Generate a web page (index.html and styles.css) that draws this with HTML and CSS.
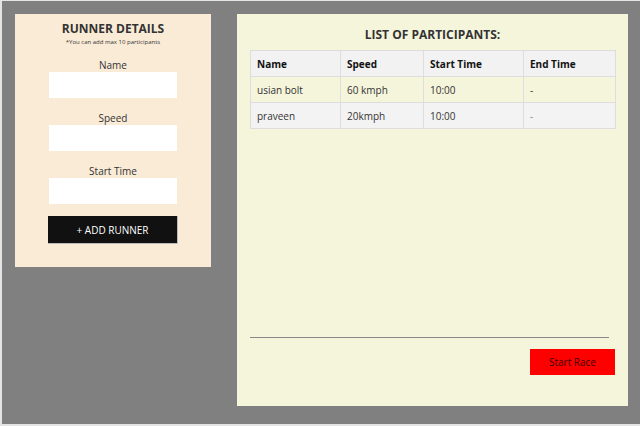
FILE: index.html
```html
<!DOCTYPE html>
<html>
<head>
<meta charset="utf-8">
<link rel="stylesheet" href="styles.css">
</head>
<body>
<div class="page">
  <div class="runner-card">
    <h2 class="card-title">RUNNER DETAILS</h2>
    <p class="note">*You can add max 10 participants</p>
    <div class="field first">
      <label class="field-label">Name</label>
      <input class="field-input" type="text">
    </div>
    <div class="field">
      <label class="field-label">Speed</label>
      <input class="field-input" type="text">
    </div>
    <div class="field">
      <label class="field-label">Start Time</label>
      <input class="field-input" type="text">
    </div>
    <button class="add-btn">+ ADD RUNNER</button>
  </div>
  <div class="list-card">
    <h2 class="card-title list-title">LIST OF PARTICIPANTS:</h2>
    <table class="participants">
      <thead>
        <tr><th class="c1">Name</th><th class="c2">Speed</th><th class="c3">Start Time</th><th class="c4">End Time</th></tr>
      </thead>
      <tbody>
        <tr class="odd"><td>usian bolt</td><td>60 kmph</td><td>10:00</td><td>-</td></tr>
        <tr class="even"><td>praveen</td><td>20kmph</td><td>10:00</td><td class="dash">-</td></tr>
      </tbody>
    </table>
    <hr class="divider">
    <div class="actions">
      <button class="start-btn">Start Race</button>
    </div>
  </div>
</div>
</body>
</html>
```
FILE: styles.css
```css
html, body {
  margin: 0;
  padding: 0;
  background: #e4e4e4;
  font-family: "Open Sans", "Noto Sans", sans-serif;
  color: #222;
}
.page {
  margin: 1px 0 0 2px;
  height: 423px;
  background: #808080;
  padding: 13px 12px 13px 13px;
  box-sizing: border-box;
  display: flex;
  align-items: flex-start;
  gap: 26px;
}
.runner-card {
  flex: 0 0 196px;
  width: 196px;
  background: #faebd7;
  box-sizing: border-box;
  padding: 7px 0 23px;
  display: flex;
  flex-direction: column;
  align-items: center;
}
.card-title {
  margin: 0;
  font-size: 12px;
  line-height: 16px;
  font-weight: 700;
  color: #333;
  text-align: center;
}
.note {
  margin: 1px 0 0;
  font-size: 6px;
  line-height: 8px;
  color: #333;
}
.field {
  display: flex;
  flex-direction: column;
  align-items: center;
  margin-top: 13px;
}
.field.first {
  margin-top: 12px;
}
.field-label {
  font-size: 10px;
  line-height: 14px;
  color: #333;
}
.field-input {
  width: 128px;
  height: 26px;
  border: none;
  background: #fff;
  box-sizing: border-box;
  margin: 0;
  padding: 0 4px;
}
.add-btn {
  margin-top: 12px;
  width: 130px;
  height: 28px;
  background: #111;
  color: #fff;
  border: 1px solid #bbb;
  border-width: 0 1px 1px 0;
  font-family: "Open Sans", "Noto Sans", sans-serif;
  font-size: 10px;
  padding: 0;
}
.list-card {
  flex: 0 0 391px;
  width: 391px;
  height: 392px;
  background: #f5f5dc;
  box-sizing: border-box;
  padding: 13px 13px 31px;
  display: flex;
  flex-direction: column;
}
.list-title {
  margin-bottom: 7px;
}
.participants {
  width: 365px;
  border-collapse: collapse;
  font-size: 10px;
  color: #333;
  table-layout: fixed;
}
.participants th, .participants td {
  box-sizing: border-box;
  border: 1px solid #ddd;
  text-align: left;
  padding: 0 6px;
}
.participants th {
  height: 26px;
  font-weight: 700;
  color: #111;
  background: #f2f2f2;
}
.participants td {
  height: 26px;
}
.c1 { width: 90px; }
.c2 { width: 83px; }
.c3 { width: 100px; }
.c4 { width: 92px; }
.odd td { background: #f5f5dc; }
.even td { background: #f3f3f3; }
.dash { color: #888; }
.divider {
  margin: auto 6px 0 0;
  border: none;
  border-top: 1px solid #888;
  height: 0;
}
.actions {
  display: flex;
  justify-content: flex-end;
  margin-top: 11px;
}
.start-btn {
  width: 85px;
  height: 26px;
  background: #ff0000;
  color: #3a0000;
  border: none;
  font-family: "Open Sans", "Noto Sans", sans-serif;
  font-size: 10px;
  padding: 0;
}
```
